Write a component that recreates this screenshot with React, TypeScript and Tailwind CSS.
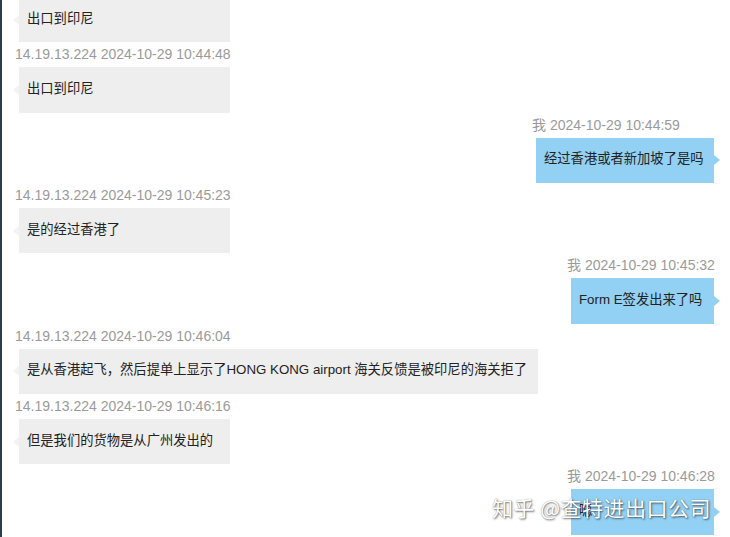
import React from "react";

type Msg = { side: "l" | "r"; ts?: string; text: string; w: number };

const msgs: Msg[] = [
  { side: "l", text: "出口到印尼", w: 211 },
  { side: "l", ts: "14.19.13.224 2024-10-29 10:44:48", text: "出口到印尼", w: 211 },
  { side: "r", ts: "我 2024-10-29 10:44:59", text: "经过香港或者新加坡了是吗", w: 178 },
  { side: "l", ts: "14.19.13.224 2024-10-29 10:45:23", text: "是的经过香港了", w: 211 },
  { side: "r", ts: "我 2024-10-29 10:45:32", text: "Form E签发出来了吗", w: 143 },
  {
    side: "l",
    ts: "14.19.13.224 2024-10-29 10:46:04",
    text: "是从香港起飞，然后提单上显示了HONG KONG airport 海关反馈是被印尼的海关拒了",
    w: 519,
  },
  { side: "l", ts: "14.19.13.224 2024-10-29 10:46:16", text: "但是我们的货物是从广州发出的", w: 211 },
  { side: "r", ts: "我 2024-10-29 10:46:28", text: "嗯", w: 143 },
];

const font = { fontFamily: '"Liberation Sans", "Noto Sans CJK SC", sans-serif' };

function Bubble({ m }: { m: Msg }) {
  const left = m.side === "l";
  return (
    <div
      className={
        "relative ml-[4px] h-[45.33px] flex items-center pl-[8px] pr-[10px] text-[13.3px] text-[#222] whitespace-nowrap " +
        (left ? "bg-[#eeeeee]" : "bg-[#92d0f4]")
      }
      style={{ width: m.w }}
    >
      {left ? (
        <span className="absolute left-[-6px] top-1/2 -translate-y-1/2 w-0 h-0 border-y-[5px] border-y-transparent border-r-[6px] border-r-[#f3f3f3]" />
      ) : (
        <span className="absolute right-[-6px] top-1/2 -translate-y-1/2 w-0 h-0 border-y-[5px] border-y-transparent border-l-[6px] border-l-[#92d0f4]" />
      )}
      <span className="-translate-y-[1px]">{m.text}</span>
    </div>
  );
}

export default function App() {
  return (
    <div className="relative w-[730px] h-[537px] overflow-hidden bg-white flex" style={font}>
      <div className="w-[2px] shrink-0 bg-[#2b3d4b]" />
      <div className="flex-1 flex flex-col mt-[-3px]">
        {msgs.map((m, i) => (
          <div
            key={i}
            className={
              "flex flex-col items-start mb-[2px] " +
              (m.side === "l" ? "self-start ml-[13px]" : "self-end mr-[16px]")
            }
          >
            {m.ts && (
              <>
                <div className="h-[20px] w-0 whitespace-nowrap text-[14px] leading-[20px] text-[#9a9a9a]">
                  {m.ts}
                </div>
                <div className="h-[3px]" />
              </>
            )}
            <Bubble m={m} />
          </div>
        ))}
      </div>
      <div
        className="absolute left-[492px] top-[493px] text-[21px] leading-[28px] text-white whitespace-nowrap tracking-[0.5px]"
        style={{ textShadow: "1px 1px 2px rgba(0,0,0,0.55), 0 0 1px rgba(0,0,0,0.4)", fontFamily: '"Noto Sans CJK SC", sans-serif' }}
      >
        知乎 @查特进出口公司
      </div>
    </div>
  );
}
